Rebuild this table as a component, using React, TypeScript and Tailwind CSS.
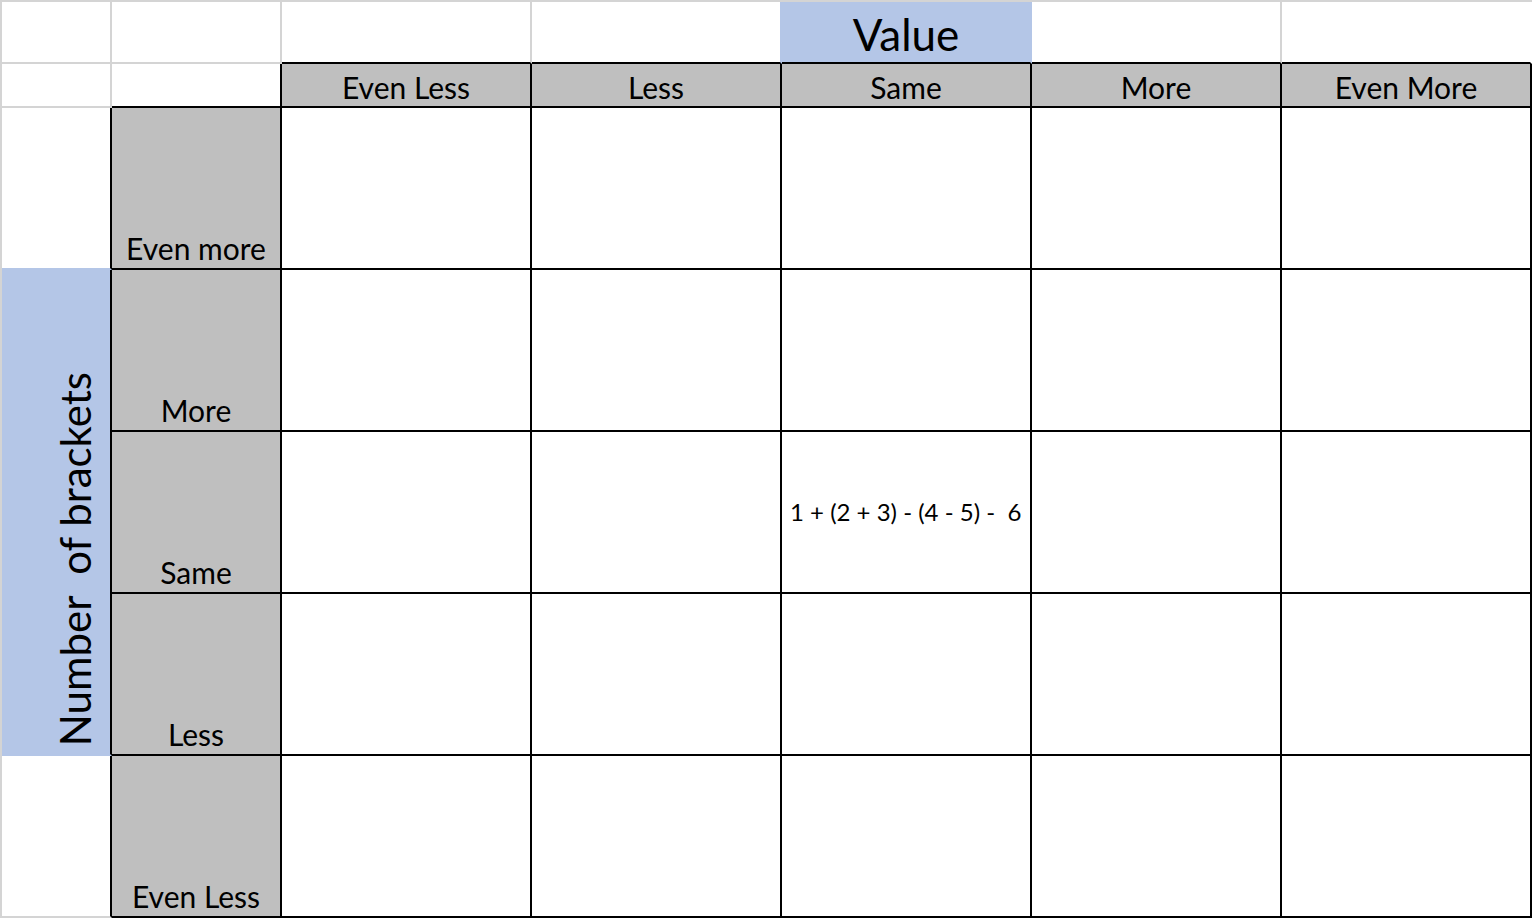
import React from 'react';

const cols = ['Even Less', 'Less', 'Same', 'More', 'Even More'];
const rows = ['Even more', 'More', 'Same', 'Less', 'Even Less'];

const font = "font-['Lato','Liberation_Sans',sans-serif]";

export default function App() {
  return (
    <div className={`w-[1532px] h-[918px] bg-white text-black ${font} overflow-hidden`}>
      <div className="grid grid-cols-[110px_170px_250px_250px_250px_250px_250px] grid-rows-[62px_44px_162px_162px_162px_162px_162px] border-t-2 border-l-2 border-[#d4d4d4]">
        {/* row 1 */}
        <div className="border-r-2 border-b-2 border-[#d4d4d4]" />
        <div className="border-r-2 border-b-2 border-[#d4d4d4]" />
        <div className="border-r-2 border-r-[#d4d4d4] border-b-2 border-b-black" />
        <div className="border-r-2 border-r-[#b4c6e7] border-b-2 border-b-black" />
        <div className="flex items-end justify-center bg-[#b4c6e7] border-r-2 border-r-[#b4c6e7] border-b-2 border-b-black pb-[6px]">
          <span className="text-[44px] leading-none">Value</span>
        </div>
        <div className="border-r-2 border-r-[#d4d4d4] border-b-2 border-b-black" />
        <div className="border-r-2 border-r-white border-b-2 border-b-black" />

        {/* row 2: column headers */}
        <div className="border-r-2 border-b-2 border-[#d4d4d4]" />
        <div className="border-r-2 border-b-2 border-black" />
        {cols.map((c) => (
          <div key={c} className="flex items-end justify-center bg-[#bfbfbf] border-r-2 border-b-2 border-black pb-[4px]">
            <span className="text-[30px] leading-none">{c}</span>
          </div>
        ))}

        {/* rows 3-7 */}
        {rows.map((r, i) => (
          <React.Fragment key={r + i}>
            {i === 0 && <div className="border-r-2 border-r-black border-b-2 border-b-[#b4c6e7]" />}
            {i === 1 && (
              <div className="row-span-3 flex items-end justify-start pl-[52px] pb-[8px] bg-[#b4c6e7] border-r-2 border-r-black border-b-2 border-b-[#b4c6e7]">
                <span className="[writing-mode:vertical-rl] rotate-180 text-[42px] leading-none whitespace-pre">Number  of brackets</span>
              </div>
            )}
            {i === 4 && <div className="border-r-2 border-r-black border-b-2 border-b-[#d4d4d4]" />}
            <div className="flex items-end justify-center bg-[#bfbfbf] border-r-2 border-b-2 border-black pb-[5px]">
              <span className="text-[30px] leading-none">{r}</span>
            </div>
            {cols.map((c, j) => (
              <div key={c} className="flex items-center border-r-2 border-b-2 border-black pl-[8px]">
                {i === 2 && j === 2 && (
                  <span className="text-[24px] leading-none whitespace-pre">1 + (2 + 3) - (4 - 5) -  6</span>
                )}
              </div>
            ))}
          </React.Fragment>
        ))}
      </div>
    </div>
  );
}
